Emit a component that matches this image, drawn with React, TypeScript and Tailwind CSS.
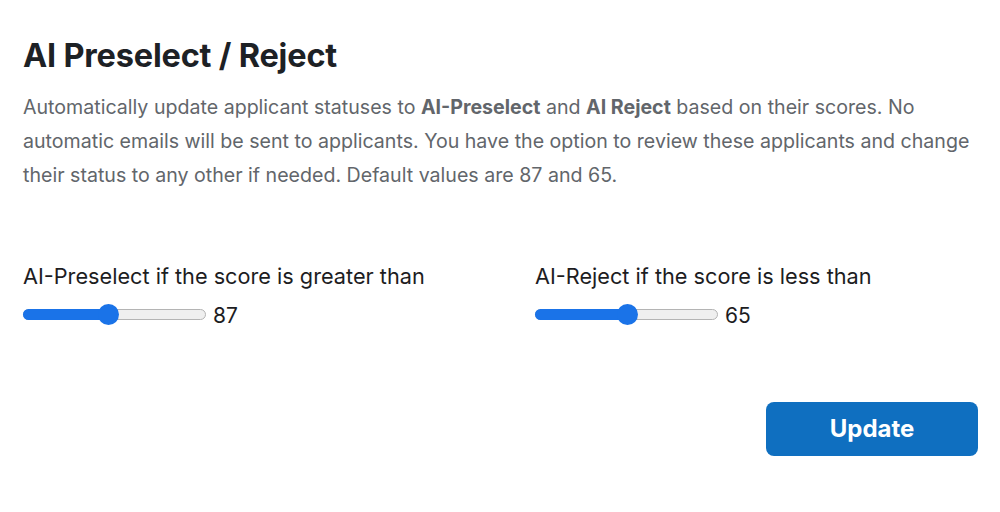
function Slider({ value }: { value: number }) {
  // value 0..100 maps onto the track
  const pct = value / 100;
  return (
    <div className="relative h-[22px] w-[183px] flex items-center">
      <div className="h-[11px] w-full rounded-full border border-[#b4b4b4] bg-[#efefef]" />
      <div
        className="absolute left-0 h-[11px] rounded-full bg-[#1a73e8]"
        style={{ width: `${pct * 183}px` }}
      />
      <div
        className="absolute h-[21px] w-[21px] rounded-full bg-[#1a73e8]"
        style={{ left: `${pct * 183 - 10}px` }}
      />
    </div>
  );
}

function Field({ label, value, pos }: { label: string; value: number; pos: number }) {
  return (
    <div className="flex flex-col gap-[10px]">
      <div className="text-[21.7px] leading-[26px] text-[#1d1d1f]">{label}</div>
      <div className="flex items-center gap-[7px]">
        <Slider value={pos} />
        <span className="mt-[4px] text-[21px] leading-[26px] text-[#1d1d1f]">{value}</span>
      </div>
    </div>
  );
}

export default function App() {
  return (
    <div className="h-[512px] w-[1000px] bg-white pl-[23px] pr-[22px] pt-[36px] font-['Inter',sans-serif]">
      <h1 className="text-[32.5px] font-bold leading-[40px] tracking-[-0.2px] text-[#1d2125]">
        AI Preselect / Reject
      </h1>
      <p className="mt-[14px] w-[955px] text-[19.6px] leading-[34px] text-[#62666b]">
        Automatically update applicant statuses to{" "}
        <span className="font-bold">AI-Preselect</span> and{" "}
        <span className="font-bold">AI Reject</span> based on their scores. No
        automatic emails will be sent to applicants. You have the option to review these
        applicants and change their status to any other if needed. Default values are 87
        and 65.
      </p>

      <div className="mt-[71px] flex">
        <div className="w-[512px]">
          <Field label="AI-Preselect if the score is greater than" value={87} pos={46.5} />
        </div>
        <div>
          <Field label="AI-Reject if the score is less than" value={65} pos={50} />
        </div>
      </div>

      <div className="mt-[73px] flex justify-end">
        <button className="h-[54px] w-[212px] rounded-[8px] bg-[#0f6fc0] text-[24px] font-bold text-white">
          Update
        </button>
      </div>
    </div>
  );
}
